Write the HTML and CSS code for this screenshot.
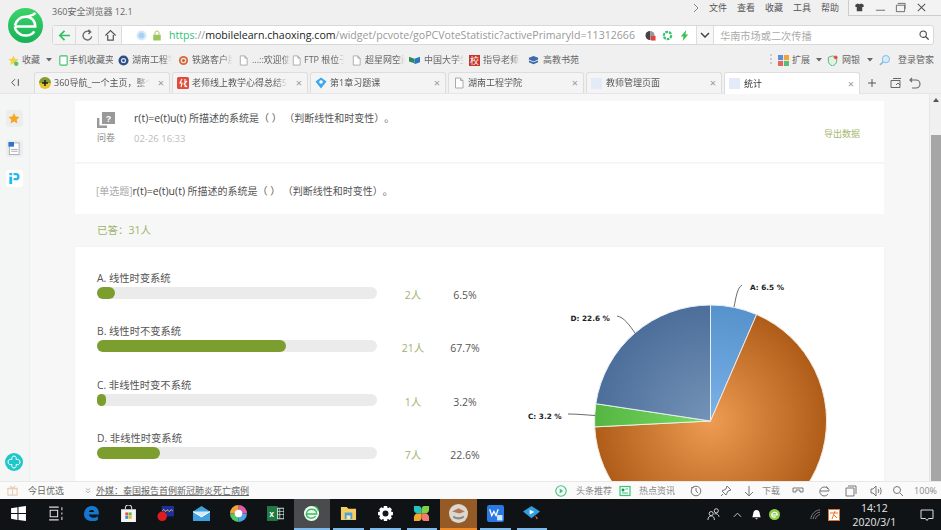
FILE: index.html
```html
<!DOCTYPE html>
<html lang="zh">
<head>
<meta charset="utf-8">
<title>统计</title>
<link rel="stylesheet" href="styles.css">
</head>
<body>
<div class="app">
  <header class="chrome">
    <div class="top">
      <svg class="logo" viewBox="0 0 36 36"><defs><linearGradient id="lg" x1="0" y1="0" x2="0" y2="1"><stop offset="0" stop-color="#3dd36b"/><stop offset="1" stop-color="#16b257"/></linearGradient></defs><circle cx="18" cy="18" r="18" fill="url(#lg)"/><path d="M7 19h21c0-6-4-10-10-10-5 0-9 3-11 9M28 5c-2 3-6 3-9 4M27 24c-3 5-12 6-17 1-2-2-3-4-3-6" fill="none" stroke="#fff" stroke-width="2.6"/></svg>
      <div class="top-main">
        <div class="titlerow">
          <span class="apptitle">360安全浏览器 12.1</span>
          <nav class="menu">
            <svg class="menu-chev" viewBox="0 0 6 10"><path d="M1 1l4 4-4 4" fill="none" stroke="#888"/></svg>
            <span>文件</span><span>查看</span><span>收藏</span><span>工具</span><span>帮助</span>
          </nav>
          <div class="winbtns">
            <svg viewBox="0 0 12 12"><path d="M1.500 3l2.500-1.500 2 1 2-1L10.500 3v2.500H9V10H3V5.500H1.500z" fill="#444"/></svg>
            <svg viewBox="0 0 12 12"><path d="M1 9h10" stroke="#666"/></svg>
            <svg viewBox="0 0 12 12"><path d="M1.500 3.500h9v7h-9zM3 1.500h8v6" fill="none" stroke="#666"/></svg>
            <svg viewBox="0 0 12 12"><path d="M2 2l8 8M10 2l-8 8" stroke="#555" stroke-width="1.100"/></svg>
          </div>
        </div>
        <div class="addr">
          <div class="navbtn"><svg viewBox="0 0 14 14"><path d="M13 7H2M7 2L2 7l5 5" fill="none" stroke="#2fc05f" stroke-width="1.800"/></svg></div>
          <div class="navbtn"><svg viewBox="0 0 14 14"><path d="M11.500 8A4.700 4.700 0 1 1 9.500 3.200M8 .8l2.500 2.500L8 5.500" fill="none" stroke="#666" stroke-width="1.400"/></svg></div>
          <div class="navbtn"><svg viewBox="0 0 14 14"><path d="M1.500 7L7 1.800 12.500 7M4 6.500V12h6V6.500" fill="none" stroke="#555" stroke-width="1.300"/></svg></div>
          <div class="url">
            <svg class="urlicon-dot" viewBox="0 0 12 12"><circle cx="6" cy="6" r="5.500" fill="#d6e9f8"/><circle cx="6" cy="6" r="3.200" fill="#a9d2f2"/></svg>
            <svg class="urlicon-lock" viewBox="0 0 12 12"><path d="M3.500 5V3a2.500 2.500 0 0 1 5 0v2" fill="none" stroke="#a6c76d" stroke-width="1.200"/><rect x="1.500" y="5" width="9" height="7" fill="#9cc65c"/></svg>
            <div class="urltext"><span class="u-g">https</span><span class="u-l">://</span><span class="u-d">mobilelearn.chaoxing.com</span><span class="u-l">/widget/pcvote/goPCVoteStatistic?activePrimaryId=11312666</span></div>
            <svg class="urlicon" viewBox="0 0 12 12"><path d="M5.500 1a4.500 4.500 0 0 0 0 10z" fill="#444"/><path d="M5.500 1a4.500 4.500 0 0 1 0 10z" fill="#999"/><rect x="6.500" y="6.500" width="5" height="5" fill="#e8403a"/></svg>
            <svg class="urlicon" viewBox="0 0 12 12"><circle cx="6" cy="6" r="4" fill="none" stroke="#35c070" stroke-width="2.400" stroke-dasharray="3 1"/></svg>
            <svg class="urlicon" viewBox="0 0 12 12"><path d="M8 0L2 7h3l-1 5 6-7H7z" fill="#35c24a"/></svg>
          </div>
          <div class="drop"><svg viewBox="0 0 10 6"><path d="M1 1l4 4 4-4" fill="none" stroke="#444" stroke-width="1.500"/></svg></div>
          <div class="search"><span>华南市场或二次传播</span><svg viewBox="0 0 12 12"><circle cx="5" cy="5" r="3.800" fill="none" stroke="#444" stroke-width="1.300"/><path d="M8 8l3.500 3.500" stroke="#444" stroke-width="1.500"/></svg></div>
        </div>
      </div>
    </div>
    <div class="bookmarks">
      <svg class="bm-ic" viewBox="0 0 12 12"><path d="M6 .5l1.700 3.600 3.800.5-2.800 2.600.7 3.800L6 9.100l-3.400 1.900.7-3.800L.5 4.600l3.800-.5z" fill="#f2d24a"/><circle cx="9" cy="9.500" r="2.400" fill="#4fc76a"/></svg>
      <span class="bm-t w-a">收藏</span>
      <svg class="caret" viewBox="0 0 6 4"><path d="M0 0h6L3 3.500z" fill="#666"/></svg>
      <svg class="bm-ic mr0" viewBox="0 0 12 12"><rect x="2" y="1" width="8" height="10" rx="1" fill="#fff" stroke="#3cc06a" stroke-width="1.200"/></svg>
      <span class="bm-t w-b">手机收藏夹</span>
      <svg class="bm-ic" viewBox="0 0 12 12"><circle cx="6" cy="6" r="5.500" fill="#2f4f86"/><circle cx="6" cy="6" r="2.800" fill="#dfe6f2"/><circle cx="6" cy="6" r="1.500" fill="#2f4f86"/></svg>
      <span class="bm-t fade w-c">湖南工程学</span>
      <svg class="bm-ic" viewBox="0 0 12 12"><circle cx="6" cy="6" r="5" fill="#d9683c"/><circle cx="6" cy="6" r="3" fill="#f4e3d6"/><circle cx="6" cy="6" r="1.500" fill="#c2502c"/></svg>
      <span class="bm-t fade w-c">铁路客户服</span>
      <svg class="bm-ic" viewBox="0 0 12 12"><path d="M2.500 1h5l2.500 2.500V11h-7.500zM7.500 1v2.500H10" fill="#fff" stroke="#aaa"/></svg>
      <span class="bm-t fade w-d">...::欢迎使</span>
      <svg class="bm-ic mr2" viewBox="0 0 12 12"><path d="M2.500 1h5l2.500 2.500V11h-7.500zM7.500 1v2.500H10" fill="#fff" stroke="#aaa"/></svg>
      <span class="bm-t fade w-e">FTP 根位于</span>
      <svg class="bm-ic" viewBox="0 0 12 12"><path d="M2.500 1h5l2.500 2.500V11h-7.500zM7.500 1v2.500H10" fill="#fff" stroke="#aaa"/></svg>
      <span class="bm-t fade w-g">超星网空间</span>
      <svg class="bm-ic mr4" viewBox="0 0 12 12"><path d="M0 2l6 2v5L0 7z" fill="#2f8a5a"/><path d="M6 4l6-2v6l-6 2z" fill="#2a76c0"/></svg>
      <span class="bm-t fade w-h">中国大学生</span>
      <span class="bm-red">校</span>
      <span class="bm-t fade w-f">指导老师工</span>
      <svg class="bm-ic mr4" viewBox="0 0 12 12"><path d="M1 3l5-2 5 2v2l-5 2-5-2zM1 6l5 2 5-2v2l-5 2-5-2z" fill="#3f6aa8"/></svg>
      <span class="bm-t">高教书苑</span>
      <div class="bm-right">
        <span class="dots"></span>
        <svg class="bm-ic" viewBox="0 0 12 12"><rect width="5.500" height="5.500" fill="#5b8fd6"/><rect x="6.500" width="5.500" height="5.500" fill="#f2a33c"/><rect y="6.500" width="5.500" height="5.500" fill="#e8655a"/><rect x="6.500" y="6.500" width="5.500" height="5.500" fill="#57bf72"/></svg>
        <span class="bm-t">扩展</span>
        <svg class="caret mr5" viewBox="0 0 6 4"><path d="M0 0h6L3 3.500z" fill="#666"/></svg>
        <svg class="bm-ic mr4" viewBox="0 0 12 12"><path d="M6 1l4.500 1.500V7c0 2.500-2.500 4-4.500 5-2-1-4.500-2.500-4.500-5V2.500z" fill="#dff2e3" stroke="#49b96b"/><circle cx="9.500" cy="2.500" r="2" fill="#e8503f"/></svg>
        <span class="bm-t mr7">网银</span>
        <svg class="caret" viewBox="0 0 6 4"><path d="M0 0h6L3 3.500z" fill="#666"/></svg>
        <svg class="bm-ic mr0" viewBox="0 0 12 12"><circle cx="7.500" cy="4.500" r="4" fill="#d6ebfa" stroke="#7db7e6"/><path d="M4.500 7.500L1 11" stroke="#7db7e6" stroke-width="1.600"/></svg>
        <span class="bm-t bm-login">登录管家</span>
      </div>
    </div>
    <div class="tabbar">
      <svg class="tabback" viewBox="0 0 12 10"><path d="M6 1L2 5l4 4M10 1v8" fill="none" stroke="#555" stroke-width="1.200"/></svg>
      <div class="tab"><svg class="favicon" viewBox="0 0 12 12"><circle cx="6" cy="6" r="6" fill="#e9c62c"/><path d="M6 0a6 6 0 0 0-6 6h12a6 6 0 0 0-6-6z" fill="#2f7d33" opacity=".55"/><path d="M6 3v6M3 6h6" stroke="#222" stroke-width="1.600"/></svg><span class="tabname">360导航_一个主页，整个</span><span class="x">×</span></div>
      <div class="tab"><svg class="favicon" viewBox="0 0 12 12"><rect width="12" height="12" rx="1.500" fill="#e14b3b"/><path d="M5 2L3 6h2L4 10M8 2v8M10 4L7 7l3 3" fill="none" stroke="#fff" stroke-width="1.100"/></svg><span class="tabname">老师线上教学心得总结5篇</span><span class="x">×</span></div>
      <div class="tab"><svg class="favicon" viewBox="0 0 12 12"><path d="M6 .5l5.500 4L6 11.500.5 4.500z" fill="#3ea6ea"/><circle cx="6" cy="5" r="1.800" fill="#fff"/></svg><span class="tabname">第1章习题课</span><span class="x">×</span></div>
      <div class="tab"><svg class="favicon" viewBox="0 0 12 12"><path d="M2.500 1h5l2.500 2.500V11h-7.500zM7.500 1v2.500H10" fill="#fff" stroke="#aaa"/></svg><span class="tabname">湖南工程学院</span><span class="x">×</span></div>
      <div class="tab"><span class="favbox"></span><span class="tabname">教师管理页面</span><span class="x">×</span></div>
      <div class="tab tab-on"><span class="favbox"></span><span class="tabname">统计</span><span class="x">×</span></div>
      <svg class="tabplus" viewBox="0 0 10 10"><path d="M5 0v10M0 5h10" stroke="#555" stroke-width="1.200"/></svg>
      <svg class="tabtool" viewBox="0 0 12 12"><path d="M3 1.500h8M1 3.500h9v7H1z" fill="none" stroke="#666"/><path d="M6 8l2-2 2 2" fill="none" stroke="#666"/></svg>
      <svg class="tabtool" viewBox="0 0 12 12"><path d="M3 1L1 3l2 2M1 3h6a3.500 3.500 0 0 1 0 8H3" fill="none" stroke="#666" stroke-width="1.100"/></svg>
    </div>
  </header>

  <div class="body">
    <aside class="side">
      <div class="sidebtn"><svg viewBox="0 0 12 12"><path d="M6 .5l1.700 3.600 3.800.5-2.800 2.600.7 3.800L6 9.100l-3.400 1.900.7-3.800L.5 4.600l3.800-.5z" fill="#f5a623"/></svg></div>
      <div class="sidebtn"><svg viewBox="0 0 12 14"><rect x="1" y="1" width="10.500" height="12.500" fill="#fff" stroke="#aab"/><rect width="6" height="5" fill="#2f74d0"/><path d="M3 8h7M3 10h7" stroke="#aab"/></svg></div>
      <div class="sidebtn sidebtn-white"><svg viewBox="0 0 12 14"><rect x="1" y="1" width="3" height="2.500" fill="#25b7f0"/><rect x="1" y="5" width="3" height="8" fill="#25b7f0"/><path d="M5.500 1H8a3.800 3.800 0 0 1 0 8H5.500V6.500H8a1.300 1.300 0 0 0 0-3H5.500z" fill="#25b7f0"/></svg></div>
      <svg class="sidefab" viewBox="0 0 18 18"><circle cx="9" cy="9" r="9" fill="#1fc7c9"/><path d="M9 3c2 0 2.500 2 2 3.500 2-.5 4 0 4 2.500s-2 3-4 2.500c.5 1.500 0 3.500-2 3.500s-2.500-2-2-3.500C5 12 3 11.500 3 9s2-3 4-2.500C6.500 5 7 3 9 3z" fill="none" stroke="#fff"/></svg>
    </aside>
    <main class="page">
      <div class="sheet">
        <section class="card head">
          <div class="kind">
            <svg viewBox="0 0 18 16"><rect x="5" y="0" width="13" height="12" fill="#999"/><path d="M1.200 6v8.800H10" fill="none" stroke="#999" stroke-width="2.400"/><text x="11.500" y="9.500" class="qmark">?</text></svg>
            <span>问卷</span>
          </div>
          <div class="headmain">
            <div class="qtitle"><span class="lat">r(t)=e(t)u(t)</span> 所描述的系统是（ ） （判断线性和时变性）。</div>
            <div class="date">02-26 16:33</div>
          </div>
          <a class="export">导出数据</a>
        </section>
        <section class="card q"><span class="qtype">[单选题]</span><span class="lat">r(t)=e(t)u(t)</span> 所描述的系统是（ ） （判断线性和时变性）。</section>
        <div class="answered">已答：31人</div>
        <section class="card result">
          <div class="opts">
            <div class="opt"><div class="optname">A. 线性时变系统</div><div class="track"><div class="fill" style="width:18px"></div></div><div class="cnt">2人</div><div class="pct">6.5%</div></div>
            <div class="opt"><div class="optname">B. 线性时不变系统</div><div class="track"><div class="fill" style="width:189px"></div></div><div class="cnt">21人</div><div class="pct">67.7%</div></div>
            <div class="opt"><div class="optname">C. 非线性时变不系统</div><div class="track"><div class="fill" style="width:9px"></div></div><div class="cnt">1人</div><div class="pct">3.2%</div></div>
            <div class="opt"><div class="optname">D. 非线性时变系统</div><div class="track"><div class="fill" style="width:63px"></div></div><div class="cnt">7人</div><div class="pct">22.6%</div></div>
          </div>
          <svg class="pie" width="340" height="270" viewBox="0 0 340 270">
            <defs>
              <radialGradient id="ga" gradientUnits="userSpaceOnUse" cx="200.500" cy="151" r="116"><stop offset="0" stop-color="#7bb2ea"/><stop offset="1" stop-color="#5692cb"/></radialGradient>
              <radialGradient id="gb" gradientUnits="userSpaceOnUse" cx="200.500" cy="151" r="116"><stop offset="0" stop-color="#ee9c52"/><stop offset="1" stop-color="#ae5c18"/></radialGradient>
              <radialGradient id="gc" gradientUnits="userSpaceOnUse" cx="200.500" cy="151" r="116"><stop offset="0" stop-color="#78dc64"/><stop offset="1" stop-color="#55b542"/></radialGradient>
              <radialGradient id="gd" gradientUnits="userSpaceOnUse" cx="200.500" cy="151" r="116"><stop offset="0" stop-color="#7493b7"/><stop offset="1" stop-color="#4c6e9a"/></radialGradient>
            </defs>
            <path d="M200.500 151L200.500 35A116 116 0 0 1 246.600 44.500Z" fill="url(#ga)" stroke="#e8eef4"/>
            <path d="M200.500 151L246.600 44.500A116 116 0 1 1 84.700 156.900Z" fill="url(#gb)" stroke="#f4e8dc"/>
            <path d="M200.500 151L84.700 156.900A116 116 0 0 1 85.800 133.700Z" fill="url(#gc)" stroke="#e8f4e4"/>
            <path d="M200.500 151L85.800 133.700A116 116 0 0 1 200.500 35Z" fill="url(#gd)" stroke="#e8eef4"/>
            <path d="M224 37C226 28 227 18 232 15" class="lead"/>
            <path d="M107 46C114 47 120 56 125 63" class="lead"/>
            <path d="M58 144C68 144 76 145 85 145.500" class="lead"/>
            <text x="240" y="20" class="plabel">A: 6.5 %</text>
            <text x="60.500" y="51" class="plabel">D: 22.6 %</text>
            <text x="18" y="149" class="plabel">C: 3.2 %</text>
          </svg>
        </section>
      </div>
      <div class="scrollbar"><svg class="sb-up" viewBox="0 0 6 4"><path d="M3 0l3 4H0z" fill="#555"/></svg><div class="sb-thumb"></div></div>
    </main>
  </div>

  <footer class="status">
    <svg class="st-gift" viewBox="0 0 12 12"><path d="M1 4h10v7H1zM0 3.500h12M6 3.500V11M3 1l3 2.500L9 1" fill="none" stroke="#e8cdb4" stroke-width="1.200"/></svg>
    <span class="st-today">今日优选</span>
    <svg class="st-chev" viewBox="0 0 8 8"><path d="M1 1l3 2.500L7 1M1 4.500L4 7l3-2.500" fill="none" stroke="#888" stroke-width=".8"/></svg>
    <a class="st-link">外媒：泰国报告首例新冠肺炎死亡病例</a>
    <div class="st-right">
      <svg class="st-ic" viewBox="0 0 12 12"><circle cx="6" cy="6" r="5.200" fill="none" stroke="#3cc47c" stroke-width="1.100"/><path d="M4.700 3.500l3.500 2.500-3.500 2.500z" fill="#3cc47c"/></svg>
      <span class="st-t w1">头条推荐</span>
      <svg class="st-ic" viewBox="0 0 12 12"><rect x="1" y="1.500" width="10" height="9" fill="none" stroke="#3cc47c" stroke-width="1.200"/><path d="M3 4h2v2H3zM6.500 4H9M3 8h6" stroke="#3cc47c"/></svg>
      <span class="st-t w2">热点资讯</span>
      <svg class="st-ic m-a" viewBox="0 0 12 12"><circle cx="6" cy="6" r="4.800" fill="none" stroke="#777"/><path d="M6 3v3l2 2M1 3l3-1" fill="none" stroke="#777"/></svg>
      <svg class="st-ic m-b" viewBox="0 0 12 12"><path d="M7 1l4 4-3 1-2 4-4-4 4-2zM3 9l-2 2" fill="none" stroke="#777"/></svg>
      <svg class="st-ic m-c" viewBox="0 0 12 12"><path d="M6 1v10M2 7l4 4 4-4" fill="none" stroke="#777"/></svg>
      <span class="st-t w3">下载</span>
      <svg class="st-ic m-d" viewBox="0 0 12 12"><path d="M1 3h10v4H8V5H7v0H5V5H4v2H1z" fill="none" stroke="#777"/></svg>
      <svg class="st-ic m-e" viewBox="0 0 12 12"><path d="M10 4A4.500 4.500 0 1 0 10 9M2 6h9c0-2-1-3.500-3-4.500" fill="none" stroke="#777"/></svg>
      <svg class="st-ic m-f" viewBox="0 0 12 12"><path d="M3 1h8v8M1 3h8v8H1z" fill="none" stroke="#777"/></svg>
      <svg class="st-ic m-g" viewBox="0 0 12 12"><path d="M1 4h2l3-3v10L3 8H1z" fill="none" stroke="#777"/><path d="M8 4c1 1 1 3 0 4M10 2.500c1.500 2 1.500 5 0 7" fill="none" stroke="#777"/></svg>
      <svg class="st-ic m-h" viewBox="0 0 12 12"><circle cx="5" cy="5" r="3.500" fill="none" stroke="#777"/><path d="M8 8l3 3" stroke="#777"/></svg>
      <span class="st-zoom">100%</span>
    </div>
  </footer>

  <div class="taskbar">
    <div class="tb"><svg viewBox="0 0 16 16"><path d="M1 3l6-1v5.500H1zM8 1.800L15 1v6.500H8zM1 8.500h6V14l-6-1zM8 8.500h7V15l-7-1z" fill="#fff"/></svg></div>
    <div class="tb"><svg viewBox="0 0 16 16"><path d="M2 2h9M2 14h9M3 5h7v6H3zM14 2v3M14 7v2M14 11v3" fill="none" stroke="#ddd"/></svg></div>
    <div class="tb"><svg viewBox="0 0 16 16"><path d="M1 9c0-5 3-8 7.500-8S15 4 15 9H5.500c.5 3 4.500 4 8.500 1.500V14c-5 2.500-13 1-13-5zM5.500 6.500h5C10 4 6.500 4 5.500 6.500z" fill="#1578d0"/></svg></div>
    <div class="tb"><svg viewBox="0 0 16 16"><path d="M5 4V3a3 3 0 0 1 6 0v1" fill="none" stroke="#ddd"/><rect x="1" y="4" width="14" height="12" fill="#f4f4f4"/><rect x="5" y="7" width="2.800" height="2.800" fill="#e8503f"/><rect x="8.200" y="7" width="2.800" height="2.800" fill="#6db33f"/><rect x="5" y="10.200" width="2.800" height="2.800" fill="#2f8fe0"/><rect x="8.200" y="10.200" width="2.800" height="2.800" fill="#f2b91c"/></svg></div>
    <div class="tb"><svg viewBox="0 0 18 18"><rect x="5" y="1" width="13" height="11" fill="#1c2f9c"/><path d="M6 6c1.500-4 2.500 3 4 0s2.500 3 4 0 2 1 3 0" fill="none" stroke="#f2d24a"/><circle cx="5.500" cy="12" r="5" fill="#e01b1b"/></svg></div>
    <div class="tb"><svg viewBox="0 0 18 16"><path d="M0 6l9-6 9 6v10H0z" fill="#3ea2e0"/><path d="M0 6l9 6 9-6" fill="#cfe9fa"/><path d="M0 6l9 5.500L18 6" fill="none" stroke="#fff"/></svg></div>
    <div class="tb"><svg viewBox="0 0 18 18"><path d="M9 0a9 9 0 0 1 9 9H9z" fill="#e05aa8"/><path d="M18 9a9 9 0 0 1-9 9V9z" fill="#4fa4e8"/><path d="M9 18a9 9 0 0 1-9-9h9z" fill="#4fc76a"/><path d="M0 9a9 9 0 0 1 9-9v9z" fill="#f2a33c"/><circle cx="9" cy="9" r="4" fill="#fff"/></svg></div>
    <div class="tb"><svg viewBox="0 0 16 16"><rect x="0" y="1" width="10" height="14" fill="#1f7a45"/><path d="M10 3h6v10h-6z" fill="none" stroke="#cfe8d8"/><path d="M12 3v10M10 6h6M10 9h6" stroke="#cfe8d8" stroke-width=".7"/><text x="2" y="11.500" class="xl">x</text></svg></div>
    <div class="tb tb-run tb-act"><svg viewBox="0 0 18 18"><circle cx="9" cy="9" r="8" fill="#f2fbf4"/><path d="M3.500 9.500h11c0-3-2-5-5.500-5-3 0-5 2-5.500 5 0 4 6 6.500 10 2.500" fill="none" stroke="#35c05c" stroke-width="1.400"/><path d="M13 1.500c1.500 1 3 3 3.500 5" fill="none" stroke="#35c05c" stroke-width="1.400"/></svg></div>
    <div class="tb tb-run"><svg viewBox="0 0 18 16"><path d="M1 1h6l2 2h8v12H1z" fill="#f6cd60"/><rect x="5" y="7" width="8" height="7" fill="#4aa3e0"/><rect x="7" y="10" width="4" height="4" fill="#f6e6b0"/></svg></div>
    <div class="tb tb-run"><svg viewBox="0 0 16 16"><path d="M6.500 1h3l.5 2 2-1 2 2-1 2 2 .5v3l-2 .5 1 2-2 2-2-1-.5 2h-3l-.5-2-2 1-2-2 1-2-2-.5v-3l2-.5-1-2 2-2 2 1z" fill="#fff"/><circle cx="8" cy="8" r="2.800" fill="#14181b"/></svg></div>
    <div class="tb tb-run"><svg viewBox="0 0 18 18"><path d="M1 1h5c2 0 3 1.500 3 4v4H5C2.500 9 1 7 1 5z" fill="#23c4c0"/><path d="M17 1h-5c-2 0-3 1.500-3 4v4h4c2.500 0 4-2 4-4z" fill="#7ed044"/><path d="M1 17h5c2 0 3-1.500 3-4V9H5c-2.500 0-4 2-4 4z" fill="#f4a82e"/><path d="M17 17h-5c-2 0-3-1.500-3-4V9h4c2.500 0 4 2 4 4z" fill="#ef7c6c"/></svg></div>
    <div class="tb tb-run tb-orange"><svg class="big" viewBox="0 0 18 18"><circle cx="9" cy="9" r="9" fill="#dcd8ce"/><path d="M3 7l6-3 6 3-5 2z" fill="#b0775a"/><path d="M4 12c3 2 7 2 10 0" stroke="#8a8a8a" fill="none" stroke-width="2"/></svg></div>
    <div class="tb tb-run"><svg viewBox="0 0 16 16"><rect width="16" height="16" rx="2" fill="#2a78e4"/><path d="M2.500 4l2 6 2-4 2 4 2-6" fill="none" stroke="#fff" stroke-width="1.200"/><rect x="9.500" y="9.500" width="5" height="5" fill="#d8e8fb"/></svg></div>
    <div class="tb tb-run"><svg viewBox="0 0 18 16"><path d="M9 0l9 6-9 7-9-7z" fill="#2f9fe0"/><path d="M7 4l5 2.500L7 9z" fill="#fff"/><path d="M13 10l3 3-2 1z" fill="#e8503f"/></svg></div>
    <div class="tray">
      <svg class="tr-people" viewBox="0 0 14 14"><circle cx="4.500" cy="6" r="2.200" fill="none" stroke="#ddd"/><path d="M1 13c0-3 1.500-4.500 3.500-4.500S8 10 8 13" fill="none" stroke="#ddd"/><circle cx="10" cy="3" r="2.200" fill="none" stroke="#ddd"/><path d="M8 6.500c2-1 4.500 0 5 3" fill="none" stroke="#ddd"/></svg>
      <svg class="tr-chev" viewBox="0 0 10 6"><path d="M1 5l4-4 4 4" fill="none" stroke="#ddd"/></svg>
      <svg class="tr-bell" viewBox="0 0 12 12"><path d="M6 1c-2.500 0-3.500 2-3.500 4L1.500 9h9l-1-4C9.500 3 8.500 1 6 1zM4.500 10h3l-1.500 1.500z" fill="#fff"/></svg>
      <svg class="tr-green" viewBox="0 0 12 12"><circle cx="6" cy="6" r="6" fill="#8fce4a"/><path d="M3 6.500h6C9 4 7.500 3.500 6 3.500S3 5 3 6.500c0 2 2 3 4.500 2" fill="none" stroke="#fff" stroke-width="1.200"/></svg>
      <svg class="tr-wifi" viewBox="0 0 12 12"><path d="M1 11C1 6 6 1 11 1M3.500 11C3.500 7.500 7.500 3.500 11 3.500M6 11c0-2 3-5 5-5" fill="none" stroke="#888"/></svg>
      <svg class="tr-orange" viewBox="0 0 12 12"><rect x=".5" y=".5" width="11" height="11" fill="#fff" stroke="#e8742c"/><path d="M2 4h8M7 2L4 10M6 6l3 3" stroke="#e8742c" fill="none"/></svg>
      <div class="clock"><div>14:12</div><div>2020/3/1</div></div>
      <svg class="tr-note" viewBox="0 0 14 14"><path d="M1 2h12v8.500H8.500L7 12.500 5.500 10.500H1z" fill="none" stroke="#ddd"/></svg>
    </div>
  </div>
</div>
</body>
</html>
```

FILE: styles.css
```css
* { box-sizing: border-box; }
html, body { margin: 0; padding: 0; height: 100%; overflow: hidden; }
body { font-family: "Open Sans", "Noto Sans CJK SC", sans-serif; font-size: 10px; color: #555; text-spacing-trim: space-all; }
svg { display: block; flex: none; }
a { color: inherit; }

.app { width: 941px; height: 530px; display: flex; flex-direction: column; overflow: hidden; }

/* browser chrome */
.chrome { height: 94px; flex: none; background: #f0f0f0; display: flex; flex-direction: column; font-size: 9px; }
.top { display: flex; height: 48px; flex: none; }
.logo { width: 35px; height: 35px; margin: 8px 9px 0 8px; }
.top-main { flex: 1; min-width: 0; padding-right: 7px; }
.titlerow { height: 24px; display: flex; align-items: flex-start; margin-right: -7px; }
.apptitle { margin-top: 5px; line-height: 14px; color: #666; }
.menu { margin-left: auto; display: flex; align-items: center; height: 16px; gap: 10px; color: #555; line-height: 16px; }
.menu-chev { width: 6px; height: 10px; margin-right: 0; }
.winbtns { margin-left: 9px; width: 93px; height: 16px; display: flex; border-left: 1px solid #ccc; border-bottom: 1px solid #ccc; background: #f3f3f3; align-items: center; padding-left: 5px; gap: 9.500px; }
.winbtns svg { width: 11px; height: 11px; }
.addr { height: 20px; margin-top: 1px; display: flex; background: #fff; border: 1px solid #d8d8d8; border-radius: 3px; }
.navbtn { width: 23px; background: #f4f4f4; border-right: 1px solid #ddd; display: flex; align-items: center; justify-content: center; }
.navbtn svg { width: 13px; height: 13px; }
.url { width: 574px; display: flex; align-items: center; padding-left: 14px; }
.urlicon-dot { width: 11px; height: 11px; }
.urlicon-lock { width: 10px; height: 11px; margin-left: 5px; }
.urltext { width: 467px; margin-left: 7px; margin-right: 9px; white-space: nowrap; overflow: hidden; font-size: 10.600px; line-height: 18px; }
.u-g { color: #35bf77; }
.u-l { color: #999; }
.u-d { color: #222; }
.urlicon { width: 11px; height: 11px; margin-right: 6px; }
.drop { width: 18px; background: #f7f7f7; border-left: 1px solid #ddd; border-right: 1px solid #ddd; display: flex; align-items: center; justify-content: center; }
.drop svg { width: 10px; height: 6px; }
.search { flex: 1; display: flex; align-items: center; justify-content: space-between; padding: 0 4px 0 6px; color: #aaa; font-size: 10.200px; }
.search svg { width: 10px; height: 10px; }

.bookmarks { height: 24px; flex: none; display: flex; align-items: center; padding-left: 8px; color: #666; }
.bm-ic { width: 11px; height: 11px; margin-right: 3px; }
.mr0 { margin-right: 0; }
.mr2 { margin-right: 2px; }
.mr4 { margin-right: 4px; }
.bm-t { white-space: nowrap; overflow: hidden; line-height: 14px; margin-right: 6px; flex: none; }
.fade { -webkit-mask-image: linear-gradient(to right, #000 80%, transparent); mask-image: linear-gradient(to right, #000 80%, transparent); }
.w-a { width: 18px; }
.w-b { width: 44px; margin-right: 5px; }
.w-c { width: 40px; }
.w-d { width: 38px; margin-right: 1px; }
.w-e { width: 40px; margin-right: 7px; }
.w-g { width: 40px; margin-right: 4px; }
.w-h { width: 40px; margin-right: 5px; }
.w-f { width: 37px; margin-right: 8px; }
.caret { width: 6px; height: 4px; margin-right: 6px; }
.bm-red { width: 11px; height: 11px; background: #c9352b; color: #fff; font-size: 9px; line-height: 11px; text-align: center; margin-right: 3px; overflow: hidden; }
.bm-right { margin-left: auto; display: flex; align-items: center; padding-right: 7px; }
.dots { width: 2px; height: 12px; margin-right: 6px; background: repeating-linear-gradient(#ccc 0 2px, transparent 2px 4px); }
.mr5 { margin-right: 5px; }
.bm-t.mr7 { margin-right: 7px; }
.bm-login { margin-left: 8px; margin-right: 0; }

.tabbar { height: 22px; flex: none; display: flex; align-items: flex-start; border-bottom: 1px solid #e6e6e6; }
.tabback { width: 10px; height: 9px; margin: 6px 14px 0 10px; }
.tab { width: 136px; height: 21px; margin-right: 2px; padding: 0 5px 0 4px; background: #f4f4f4; border: 1px solid #ddd; border-bottom: none; border-radius: 3px 3px 0 0; display: flex; align-items: center; }
.tab-on { background: #fff; height: 22px; color: #333; position: relative; }
.favicon { width: 12px; height: 12px; margin-right: 3px; }
.favbox { width: 11px; height: 11px; margin-right: 4px; background: #e2ebf7; flex: none; }
.tabname { flex: 1; min-width: 0; white-space: nowrap; overflow: hidden; line-height: 14px; -webkit-mask-image: linear-gradient(to right, #000 85%, transparent); mask-image: linear-gradient(to right, #000 85%, transparent); }
.x { color: #999; font-size: 11px; margin-left: 8px; line-height: 14px; }
.tabplus { width: 8px; height: 8px; margin: 7px 0 0 6px; }
.tabtool { width: 12px; height: 12px; margin: 5px 0 0 7px; }
.tabplus + .tabtool { margin-left: 14px; }

/* page */
.body { flex: 1; min-height: 0; display: flex; background: #f7f7f7; }
.side { width: 30px; flex: none; background: #f4f6f6; border-right: 1px solid #efefef; display: flex; flex-direction: column; align-items: center; padding: 16px 1px 0 0; position: relative; }
.sidebtn { width: 17px; height: 17px; border-radius: 3px; background: #eceeee; display: flex; align-items: center; justify-content: center; margin-bottom: 13px; }
.sidebtn svg { width: 12px; height: 13px; }
.sidebtn-white { background: #fff; }
.sidefab { width: 18px; height: 18px; margin-top: auto; margin-bottom: 10px; }

.page { flex: 1; min-width: 0; display: flex; }
.sheet { flex: 1; min-width: 0; padding: 7px 0 0 45px; overflow: hidden; }
.card { background: #fff; width: 809px; }
.head { height: 62px; margin-bottom: 1px; border-bottom: 1px solid #f4f4f4; display: flex; padding: 10px 24px 0 23px; }
.kind { width: 36px; color: #888; display: flex; flex-direction: column; line-height: 14px; font-size: 9px; margin-left: -1px; margin-top: 1px; }
.kind svg { width: 18px; height: 16px; margin-bottom: 3px; }
.qmark { font: bold 9px "Liberation Sans", sans-serif; fill: #fff; text-anchor: middle; }
.headmain { flex: 1; line-height: 14px; color: #555; margin-left: 1px; }
.lat { color: #444; font-size: 10.500px; }
.date { color: #bbb; margin-top: 7px; font-size: 9.500px; }
.export { color: #a5b86c; align-self: flex-start; margin-top: 16px; line-height: 14px; font-size: 9px; }
.qtitle { height: 14px; white-space: nowrap; }
.q { height: 50px; padding: 20px 0 0 21px; line-height: 14px; color: #555; white-space: nowrap; }
.qtype { color: #aaa; }
.answered { height: 33px; padding: 9px 0 0 22px; line-height: 15px; color: #9db36a; font-size: 10.500px; }
.result { height: 300px; display: flex; padding: 24px 0 0 22px; align-items: flex-start; box-shadow: 0 0 2px #eee; }
.opts { width: 384px; flex: none; }
.opt { display: grid; grid-template-columns: 280px 72px 32px; height: 53.400px; grid-template-rows: 16px 12px; }
.optname { grid-column: 1 / -1; line-height: 14px; font-size: 10.300px; color: #555; }
.track { height: 12px; border-radius: 6px; background: #ebebeb; }
.fill { height: 12px; border-radius: 6px; background: #7b9e2f; }
.cnt { text-align: center; color: #9db36a; line-height: 14px; margin-top: 1px; white-space: nowrap; font-size: 10.500px; }
.pct { text-align: center; color: #555; line-height: 14px; margin-top: 1px; white-space: nowrap; font-size: 10.500px; }
.pie { margin: -1px 0 0 29px; }
.lead { fill: none; stroke: #444; stroke-width: .8; }
.plabel { font: bold 7.300px "DejaVu Sans", sans-serif; fill: #222; }

.scrollbar { width: 12px; flex: none; margin-left: auto; background: #f0f0f0; border-left: 1px solid #e6e6e6; padding-top: 4px; }
.sb-up { width: 6px; height: 4px; margin: 0 auto 33px; }
.sb-thumb { height: 346px; background: #a6a6a6; margin: 0 0 0 1px; }

/* status bar */
.status { height: 18px; flex: none; background: #fafafa; border-top: 1px solid #e8e8e8; display: flex; align-items: center; padding-left: 7px; color: #666; font-size: 9px; position: relative; z-index: 1; }
.st-gift { width: 11px; height: 11px; }
.st-today { margin-left: 10px; line-height: 14px; white-space: nowrap; }
.st-chev { width: 6px; height: 7px; margin-left: 21px; }
.st-link { margin-left: 5px; text-decoration: underline; line-height: 14px; color: #666; white-space: nowrap; }
.st-right { margin-left: auto; display: flex; align-items: center; padding-right: 4px; }
.st-ic { width: 12px; height: 12px; }
.st-t { line-height: 14px; color: #888; white-space: nowrap; }
.w1 { margin: 0 7px 0 9px; }
.w2 { margin: 0 15px 0 8px; }
.m-b { margin-left: 18px; }
.m-c { margin-left: 11px; }
.st-t.w3 { margin-left: 7px; }
.m-d { margin-left: 12px; }
.m-e { margin-left: 14px; }
.m-f { margin-left: 15px; }
.m-g { margin-left: 13px; }
.m-h { margin-left: 10px; }
.st-zoom { margin-left: 10px; color: #888; white-space: nowrap; }

/* taskbar */
.taskbar { height: 31px; flex: none; background: #0f1316; display: flex; align-items: stretch; color: #e8e8e8; }
.tb { width: 36.700px; display: flex; align-items: center; justify-content: center; position: relative; padding-bottom: 2px; flex: none; }
.tb svg { width: 17px; height: 17px; }
.tb svg.big { width: 19px; height: 19px; }
.xl { font: bold 8px "Liberation Sans", sans-serif; fill: #fff; }
.tb-run::after { content: ""; position: absolute; left: 3px; right: 3px; bottom: 0; height: 2px; background: #7db9ea; }
.tb-act { background: #4a4b4c; }
.tb-act::after { left: 0; right: 0; }
.tb-orange { background: #955a26; }
.tb-orange::after { left: 0; right: 0; background: #f08a24; }
.tray { flex: 1; min-width: 0; display: flex; align-items: center; padding-left: 157px; }
.tray svg { flex: none; }
.tr-people { width: 13px; height: 13px; }
.tr-chev { width: 9px; height: 6px; margin-left: 13px; }
.tr-bell { width: 11px; height: 11px; margin-left: 9px; }
.tr-green { width: 11px; height: 11px; margin-left: 7px; }
.tr-wifi { width: 11px; height: 11px; margin-left: 30px; }
.tr-orange { width: 12px; height: 12px; margin-left: 7px; }
.clock { width: 48px; margin-left: 10px; text-align: center; line-height: 14px; font-size: 10.500px; padding-top: 1px; }
.tr-note { width: 14px; height: 14px; margin-left: 22px; }
```
